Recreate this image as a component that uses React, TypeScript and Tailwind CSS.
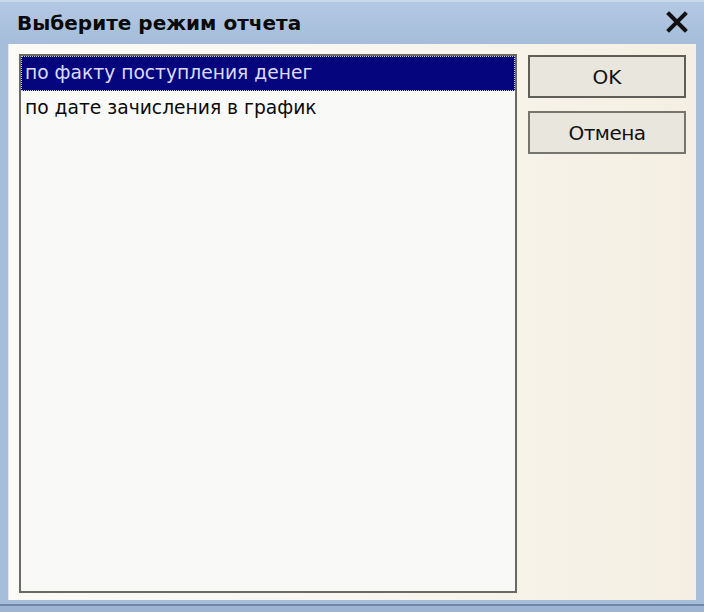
import { useState } from 'react';

const MODES = ['по факту поступления денег', 'по дате зачисления в график'];

const App = () => {
  const [selected, setSelected] = useState(0);

  return (
    <div className="w-[704px] h-[612px] flex flex-col bg-[#a7bedb] font-['DejaVu_Sans',sans-serif] select-none">
      {/* Title bar */}
      <div className="h-[44px] flex items-center justify-between pl-[17px] pr-[16px] border-t-2 border-[#c9d8ea] bg-gradient-to-b from-[#b3c8e2] to-[#a5bddb]">
        <span className="text-[20px] font-bold text-[#0a0a0a]">Выберите режим отчета</span>
        <svg width="22" height="22" viewBox="0 0 22 22" className="mb-[2px]">
          <path d="M3 3 L19 19 M19 3 L3 19" stroke="#111" strokeWidth="4" strokeLinecap="square" />
        </svg>
      </div>

      {/* Client area */}
      <div className="flex-1 mx-[8px] flex gap-[11px] pl-[10px] pr-[10px] pt-[10px] pb-[7px] bg-gradient-to-r from-[#fbfaf6] via-[#f8f6ef] to-[#f4efe2] border-l border-[#dfe6ef]">
        {/* List box */}
        <div className="w-[498px] border-2 border-[#6b6a62] bg-[#f9f9f8] flex flex-col">
          {MODES.map((mode, i) => (
            <div
              key={mode}
              onClick={() => setSelected(i)}
              className={
                i === selected
                  ? 'h-[35px] flex items-center pl-[3px] bg-[#05057e] text-[#dcdcff] text-[18.7px] border border-dotted border-[#c8c8e0]'
                  : 'h-[35px] flex items-center pl-[4px] text-[#0a0a0a] text-[18.7px]'
              }
            >
              {mode}
            </div>
          ))}
        </div>

        {/* Buttons */}
        <div className="flex flex-col gap-[13px] pt-[1px]">
          <button className="w-[158px] h-[43px] border-2 border-[#5f5e57] bg-[#e9e6dd] text-[20px] text-[#111]">
            OK
          </button>
          <button className="w-[158px] h-[43px] border-2 border-[#77766e] bg-[#e9e6dd] text-[20px] text-[#111] tracking-[-0.5px]">
            Отмена
          </button>
        </div>
      </div>

      {/* Bottom frame */}
      <div className="h-[12px] flex flex-col">
        <div className="h-[4px] bg-[#a7bedb]"></div>
        <div className="h-[2px] bg-[#6f88aa]"></div>
        <div className="flex-1 bg-[#9db5d3]"></div>
      </div>
    </div>
  );
};

export default App;
